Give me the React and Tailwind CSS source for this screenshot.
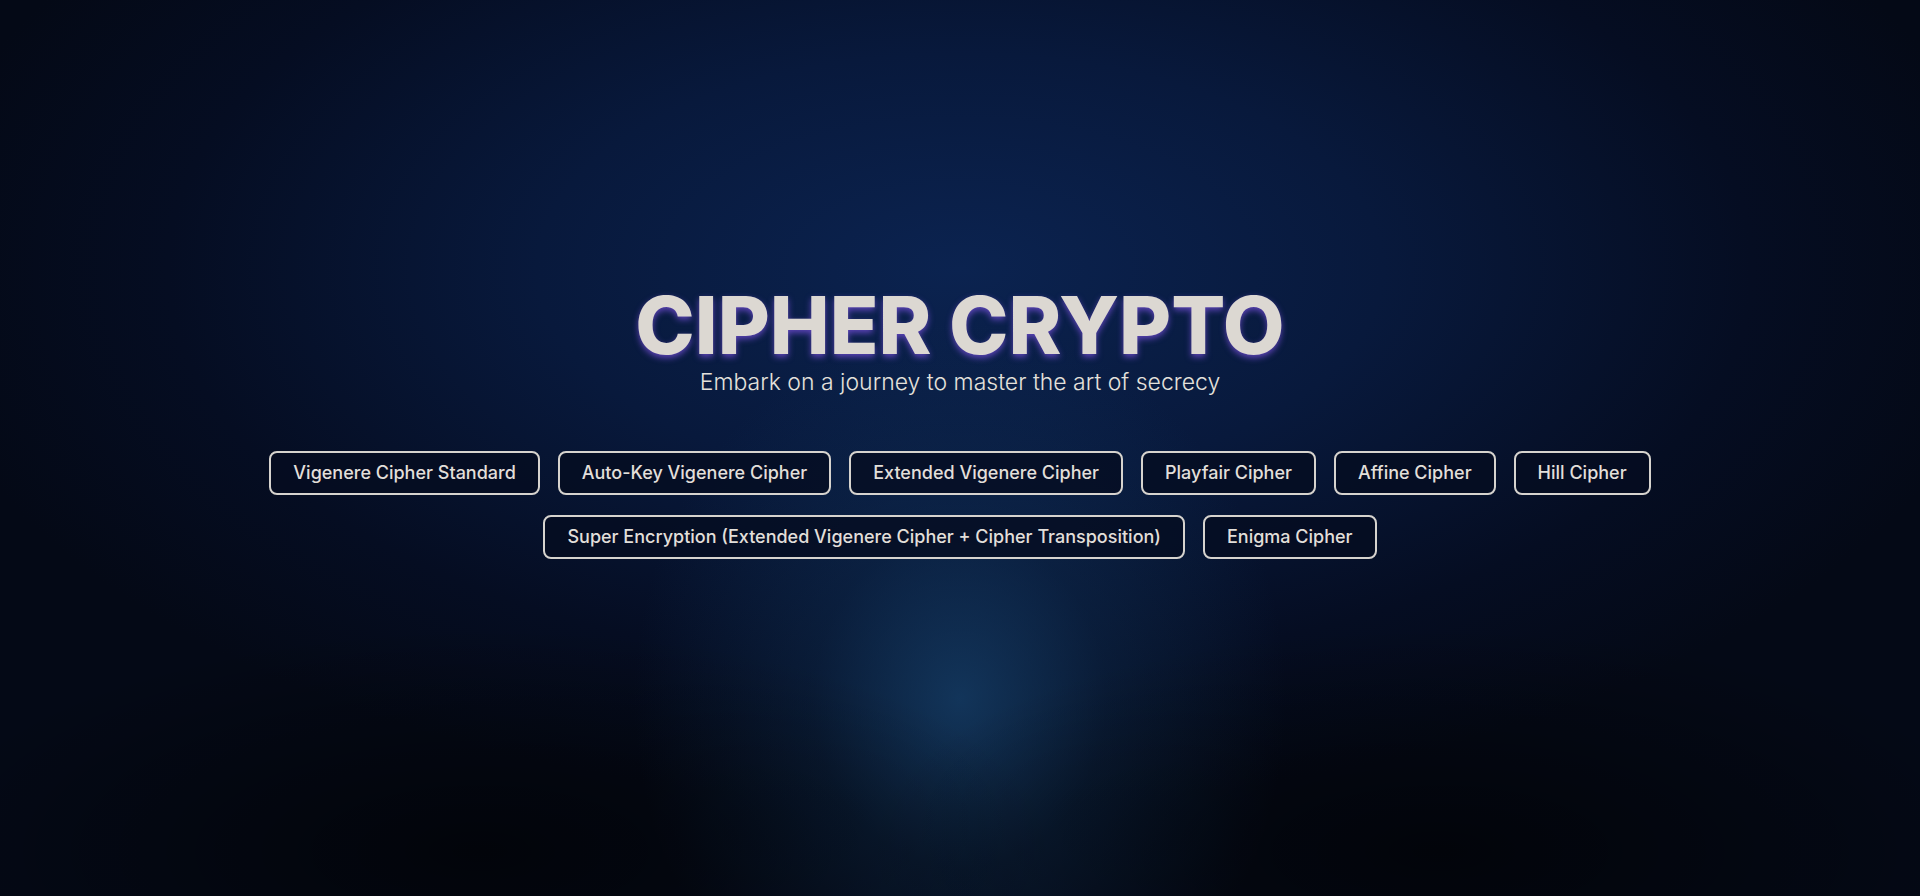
import React from "react";

const CIPHERS = [
  "Vigenere Cipher Standard",
  "Auto-Key Vigenere Cipher",
  "Extended Vigenere Cipher",
  "Playfair Cipher",
  "Affine Cipher",
  "Hill Cipher",
  "Super Encryption (Extended Vigenere Cipher + Cipher Transposition)",
  "Enigma Cipher",
];

const App = () => {
  return (
    <div className="relative h-screen w-full overflow-hidden bg-[#040a18] font-['Inter','Liberation_Sans',sans-serif]">
      {/* background glows */}
      <div className="absolute inset-0 bg-[radial-gradient(ellipse_55%_60%_at_50%_30%,#0b2350_0%,#08193c_40%,#050d22_75%,#040916_100%)]" />
      <div className="absolute inset-0 bg-[radial-gradient(ellipse_17%_42%_at_50%_78%,rgba(24,70,115,0.7)_0%,rgba(18,55,95,0.35)_45%,transparent_100%)]" />
      <div className="absolute inset-0 bg-[radial-gradient(ellipse_30%_25%_at_25%_95%,rgba(0,0,0,0.55)_0%,transparent_100%)]" />
      <div className="absolute inset-0 bg-[radial-gradient(ellipse_30%_25%_at_75%_95%,rgba(0,0,0,0.55)_0%,transparent_100%)]" />

      <div className="relative flex h-full flex-col items-center justify-center pb-[52px]">
        <h1 className="text-[80px] font-extrabold leading-none text-[#dcd8d2] [text-shadow:0_3px_6px_rgba(120,80,220,0.75)]">
          CIPHER CRYPTO
        </h1>
        <p className="text-[23px] font-light text-[#e4e1dc]">Embark on a journey to master the art of secrecy</p>

        <div className="mt-[51px] flex max-w-[1420px] flex-wrap justify-center gap-x-[18px] gap-y-5">
          {CIPHERS.map((name) => (
            <button
              key={name}
              className="rounded-lg border-2 border-[#d6d3ce] bg-[#050d20]/80 px-[22px] py-2 text-lg font-medium leading-6 text-[#e2dfda]"
            >
              {name}
            </button>
          ))}
        </div>
      </div>
    </div>
  );
};

export default App;
